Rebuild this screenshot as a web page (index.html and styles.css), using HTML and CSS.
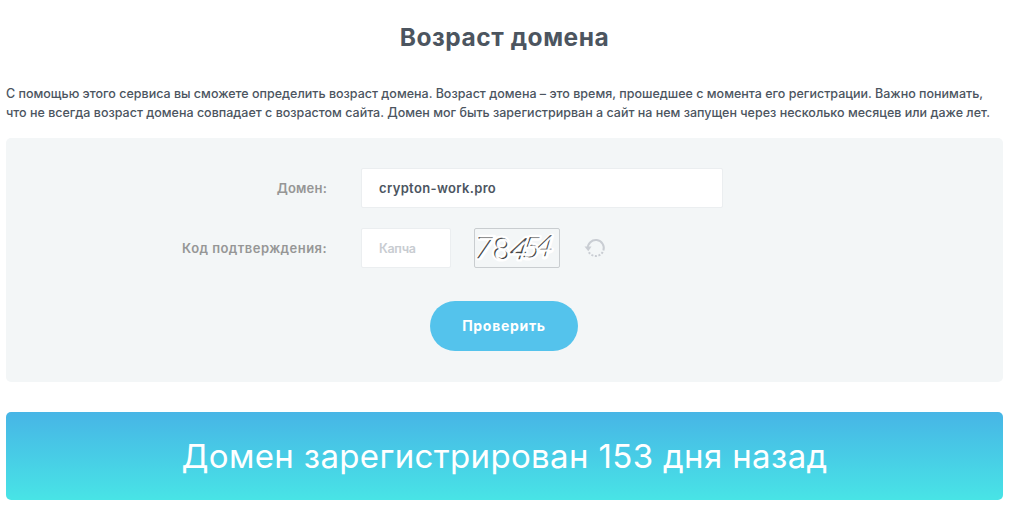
FILE: index.html
```html
<!DOCTYPE html>
<html lang="ru">
<head>
    <meta charset="UTF-8">
    <meta name="viewport" content="width=device-width, initial-scale=1.0">
    <title>Возраст домена</title>
    <link rel="stylesheet" href="styles.css">
</head>
<body>
    <h1>Возраст домена</h1>

    <p class="description">
        <span class="line">С помощью этого сервиса вы сможете определить возраст домена. Возраст домена – это время, прошедшее с момента его регистрации. Важно понимать,</span>
        <span class="line">что не всегда возраст домена совпадает с возрастом сайта. Домен мог быть зарегистрирван а сайт на нем запущен через несколько месяцев или даже лет.</span>
    </p>

    <form class="check-form">
        <div class="form-row">
            <label for="domain">Домен:</label>
            <input type="text" id="domain" class="input-domain" value="crypton-work.pro">
        </div>
        <div class="form-row">
            <label for="captcha" class="label-code">Код подтверждения:</label>
            <input type="text" id="captcha" class="input-captcha" placeholder="Капча">
            <svg class="captcha" width="86" height="40" viewBox="0 0 86 40">
                <g class="digits digits-glow">
                    <text transform="translate(-2 30) skewX(-10)">7</text>
                    <text transform="translate(17 31) rotate(3)">8</text>
                    <text transform="translate(33 32) skewX(-18)">4</text>
                    <text transform="translate(47 30) skewX(-12)">5</text>
                    <text transform="translate(60 29) skewX(-16)">4</text>
                </g>
                <g class="digits digits-dark">
                    <text transform="translate(-3 30) skewX(-10)">7</text>
                    <text transform="translate(17 31) rotate(3)">8</text>
                    <text transform="translate(33 32) skewX(-18)">4</text>
                    <text transform="translate(47 30) skewX(-12)">5</text>
                    <text transform="translate(60 28) skewX(-16)">4</text>
                </g>
                <g class="digits digits-light">
                    <text transform="translate(-1.5 31.3) skewX(-10)">7</text>
                    <text transform="translate(18.5 32.3) rotate(3)">8</text>
                    <text transform="translate(34.5 33.3) skewX(-18)">4</text>
                    <text transform="translate(48.5 31.3) skewX(-12)">5</text>
                    <text transform="translate(61.5 29.3) skewX(-16)">4</text>
                </g>
            </svg>
            <svg class="refresh" width="22" height="20" viewBox="0 0 22 20">
                <path class="arc" d="M3.8 10.5a8 8 0 1 1 15.6 2"/>
                <path class="arc arc-dotted" d="M18.7 14a8 8 0 0 1-14-.2"/>
                <path class="arrow" d="M.5 8.6h7l-3.2 4.6z"/>
            </svg>
        </div>
        <button type="button">Проверить</button>
    </form>

    <div class="result">Домен зарегистрирован 153 дня назад</div>
</body>
</html>
```
FILE: styles.css
```css
* {
    box-sizing: border-box;
}

body {
    margin: 0;
    padding: 20px 13px 0 6px;
    background: #fff;
    color: #4c555f;
    font-family: Inter, "Open Sans", sans-serif;
    overflow: hidden;
}

h1 {
    margin: 0;
    height: 34px;
    line-height: 34px;
    font-size: 24.5px;
    font-weight: 700;
    letter-spacing: 0.55px;
    text-align: center;
}

.description {
    margin: 30px 0 16px;
    font-size: 12.5px;
    font-weight: 500;
    line-height: 19px;
    white-space: nowrap;
}

.line {
    display: block;
}

.check-form {
    height: 244px;
    padding: 30px 0;
    background: #f3f6f7;
    border-radius: 5px;
}

.form-row {
    display: flex;
    align-items: center;
    height: 40px;
    margin-bottom: 20px;
}

label {
    width: 321px;
    margin-right: 34px;
    color: #969696;
    font-size: 13px;
    font-weight: 600;
    letter-spacing: 0.2px;
    text-align: right;
}

.label-code {
    letter-spacing: 0.45px;
}

input {
    height: 40px;
    padding: 0 17px;
    border: 1px solid #ebeef0;
    border-radius: 2px;
    background: #fff;
    color: #4c555f;
    font-family: inherit;
    font-size: 13px;
    font-weight: 600;
    letter-spacing: 0.35px;
}

input::placeholder {
    color: #c8ccd1;
    font-size: 12.5px;
    letter-spacing: -0.3px;
    opacity: 1;
}

.input-domain {
    width: 362px;
}

.input-captcha {
    width: 90px;
}

.captcha {
    margin-left: 23px;
    border: 1px solid #c9cdd0;
    border-radius: 2px;
}

.digits {
    font-family: Lato, sans-serif;
    font-size: 31px;
    font-weight: 300;
}

.digits-glow {
    fill: #fff;
    stroke: #fff;
    stroke-width: 5px;
    stroke-linejoin: round;
}

.digits-dark {
    fill: #444;
    stroke: #444;
    stroke-width: 0.3px;
}

.digits-light {
    fill: #fff;
    stroke: #fff;
    stroke-width: 0.8px;
}

.refresh {
    margin-left: 24px;
}

.arc {
    fill: none;
    stroke: #c9cdd3;
    stroke-width: 2;
}

.arc-dotted {
    stroke-dasharray: 2 1.6;
}

.arrow {
    fill: #c9cdd3;
}

button {
    display: block;
    width: 148px;
    height: 50px;
    margin: 33px auto 0 424px;
    padding: 0 0 2px;
    border: 0;
    border-radius: 25px;
    background: #54c3ec;
    color: #fff;
    font-family: inherit;
    font-size: 14px;
    font-weight: 700;
    letter-spacing: 0.7px;
    cursor: pointer;
}

.result {
    height: 88px;
    margin-top: 30px;
    border-radius: 5px;
    background: linear-gradient(#47b5e6, #48e4e6);
    color: #fff;
    font-size: 33px;
    font-weight: 400;
    letter-spacing: 0.35px;
    line-height: 88px;
    text-align: center;
    white-space: nowrap;
}
```
